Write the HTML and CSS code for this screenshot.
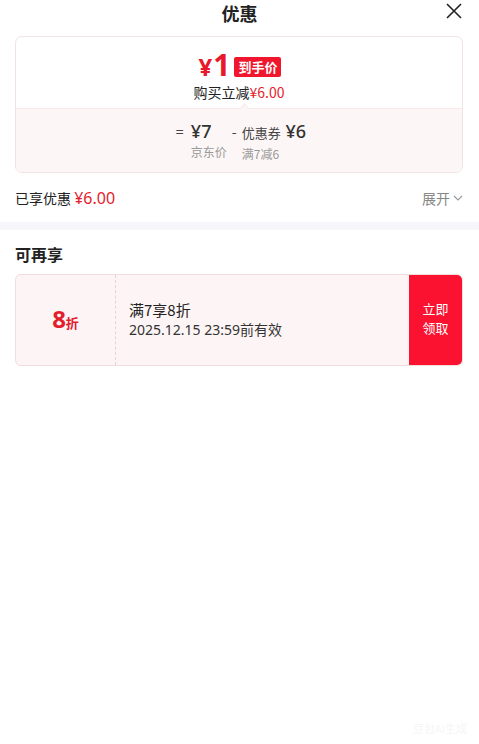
FILE: index.html
```html
<!DOCTYPE html>
<html lang="zh-CN">
<head>
<meta charset="utf-8">
<title>优惠</title>
<link rel="stylesheet" href="styles.css">
</head>
<body>
<div class="page">
  <header class="header">
    <h1 class="title">优惠</h1>
    <button class="close" aria-label="关闭">
      <svg width="16" height="16" viewBox="0 0 16 16"><path d="M1 1 L15 15 M15 1 L1 15" stroke="#222" stroke-width="1.6" fill="none"/></svg>
    </button>
  </header>

  <section class="summary">
    <div class="summary-top">
      <div class="price-row">
        <span class="price"><span class="yen">¥</span>1</span>
        <span class="badge">到手价</span>
      </div>
      <div class="save">购买立减<span class="red">¥6.00</span></div>
    </div>
    <div class="summary-bottom">
      <div class="calc">
        <div class="calc-col">
          <span class="op op-eq">=</span>
          <div class="stack">
            <span class="val">¥7</span>
            <span class="lbl">京东价</span>
          </div>
        </div>
        <div class="calc-col">
          <span class="op op-minus">-</span>
          <div class="stack">
            <span class="val"><span class="val-name">优惠券</span> ¥6</span>
            <span class="lbl">满7减6</span>
          </div>
        </div>
      </div>
    </div>
  </section>

  <div class="enjoyed">
    <div class="enjoyed-text">已享优惠 <span class="enjoyed-amt">¥6.00</span></div>
    <div class="expand">展开
      <svg width="10" height="6" viewBox="0 0 10 6"><path d="M1 1 L5 5 L9 1" stroke="#999" stroke-width="1.1" fill="none"/></svg>
    </div>
  </div>

  <div class="band"></div>

  <section class="more">
    <h2 class="more-title">可再享</h2>
    <div class="coupon">
      <div class="coupon-left"><span class="disc">8</span><span class="disc-unit">折</span></div>
      <div class="coupon-mid">
        <div class="c-name">满7享8折</div>
        <div class="c-date">2025.12.15 23:59前有效</div>
      </div>
      <button class="coupon-btn"><span class="btn-line">立即</span><span class="btn-line">领取</span></button>
    </div>
  </section>

  <div class="watermark">豆包AI生成</div>
</div>
</body>
</html>
```

FILE: styles.css
```css
* { box-sizing: border-box; }
html, body { margin: 0; padding: 0; background: #fff; }
body {
  font-family: "Noto Sans CJK SC", "Noto Sans", sans-serif;
  color: #222;
}
.page {
  width: 479px;
  height: 744px;
  position: relative;
  overflow: hidden;
}
.header {
  height: 26px;
  display: flex;
  align-items: flex-start;
  justify-content: center;
  position: relative;
}
.title {
  margin: 0;
  font-size: 18px;
  line-height: 26px;
  font-weight: 700;
  color: #222;
}
.close {
  position: absolute;
  right: 17px;
  top: 3px;
  padding: 0;
  border: 0;
  background: none;
  width: 16px;
  height: 16px;
}
.close svg { display: block; }

.summary {
  margin: 10px 16px 0 15px;
  border: 1px solid #f1e3e3;
  border-radius: 7px;
  overflow: hidden;
}
.summary-top {
  height: 71px;
  padding-top: 13px;
  display: flex;
  flex-direction: column;
  align-items: center;
}
.price-row {
  display: flex;
  align-items: center;
  height: 32px;
  gap: 4px;
  margin-left: 2px;
}
.price {
  color: #e8192c;
  font-family: "Noto Sans", sans-serif;
  font-weight: 700;
  font-size: 30px;
  line-height: 32px;
}
.yen { font-size: 24px; margin-right: 1px; }
.badge {
  background: #f0162d;
  color: #fff;
  font-weight: 700;
  font-size: 13px;
  line-height: 20px;
  height: 20px;
  padding: 0 4px;
  border-radius: 2px;
  margin-top: 2px;
}
.save {
  font-size: 14px;
  line-height: 20px;
  color: #222;
}
.red { color: #e41d2d; }

.summary-bottom {
  background: #fdf6f6;
  border-top: 1px solid #f8eaea;
  height: 64px;
  padding-top: 12px;
  display: flex;
  justify-content: center;
  position: relative;
}
.summary-bottom::before {
  content: "";
  position: absolute;
  left: 225px;
  top: -4px;
  width: 6px;
  height: 6px;
  background: #fdf6f6;
  border-left: 1px solid #f8eaea;
  border-top: 1px solid #f8eaea;
  transform: rotate(45deg);
}
.calc {
  display: flex;
  gap: 4px;
  margin-left: 4px;
}
.calc-col {
  display: flex;
  align-items: flex-start;
}
.op {
  font-size: 14px;
  line-height: 20px;
  color: #444;
}
.op-eq { width: 15px; }
.op-minus { width: 10px; }
.stack {
  display: flex;
  flex-direction: column;
  gap: 2px;
}
.val {
  font-family: "Noto Sans", "Noto Sans CJK SC", sans-serif;
  font-size: 18px;
  line-height: 20px;
  font-weight: 500;
  color: #333;
  white-space: nowrap;
}
.val-name {
  font-family: "Noto Sans CJK SC", sans-serif;
  font-size: 13px;
  font-weight: 400;
  color: #444;
}
.lbl {
  font-size: 12px;
  line-height: 17px;
  color: #999;
  white-space: nowrap;
  padding-right: 1px;
}

.enjoyed {
  height: 49px;
  padding: 0 16px 0 15px;
  display: flex;
  align-items: center;
  justify-content: space-between;
}
.enjoyed-text {
  font-size: 14px;
  color: #222;
}
.enjoyed-amt {
  color: #e41d2d;
  font-size: 16px;
  font-family: "Noto Sans", sans-serif;
}
.expand {
  font-size: 14px;
  color: #888;
  display: flex;
  align-items: center;
  gap: 3px;
}
.band {
  height: 8px;
  background: #f7f7fb;
}

.more {
  padding: 13px 16px 0 15px;
}
.more-title {
  margin: 0;
  font-size: 16px;
  line-height: 22px;
  font-weight: 700;
  color: #222;
}
.coupon {
  margin-top: 9px;
  height: 92px;
  border: 1px solid #f2dcdc;
  border-radius: 6px;
  background: #fdf5f5;
  display: flex;
  overflow: hidden;
}
.coupon-left {
  width: 100px;
  border-right: 1px dashed #e8d2d2;
  display: flex;
  align-items: baseline;
  justify-content: center;
  padding-top: 29px;
}
.disc {
  font-family: "Noto Sans", sans-serif;
  font-weight: 700;
  font-size: 24px;
  line-height: 30px;
  color: #e41d2d;
}
.disc-unit {
  font-size: 13px;
  font-weight: 700;
  color: #e41d2d;
}
.coupon-mid {
  flex: 1;
  padding-left: 13px;
  padding-bottom: 3px;
  display: flex;
  flex-direction: column;
  justify-content: center;
}
.c-name {
  font-size: 15px;
  line-height: 21px;
  color: #222;
}
.c-date {
  font-family: "Noto Sans", "Noto Sans CJK SC", sans-serif;
  font-size: 14px;
  line-height: 19px;
  color: #333;
}
.coupon-btn {
  width: 53px;
  border: 0;
  padding: 0 0 4px;
  background: #fa1230;
  color: #fff;
  font-family: "Noto Sans CJK SC", sans-serif;
  font-size: 13px;
  line-height: 19px;
  text-align: center;
  display: flex;
  flex-direction: column;
  align-items: center;
  justify-content: center;
}
.btn-line { display: block; }

.watermark {
  position: absolute;
  right: 12px;
  bottom: 8px;
  font-size: 11px;
  color: #f6f6f6;
}
```
